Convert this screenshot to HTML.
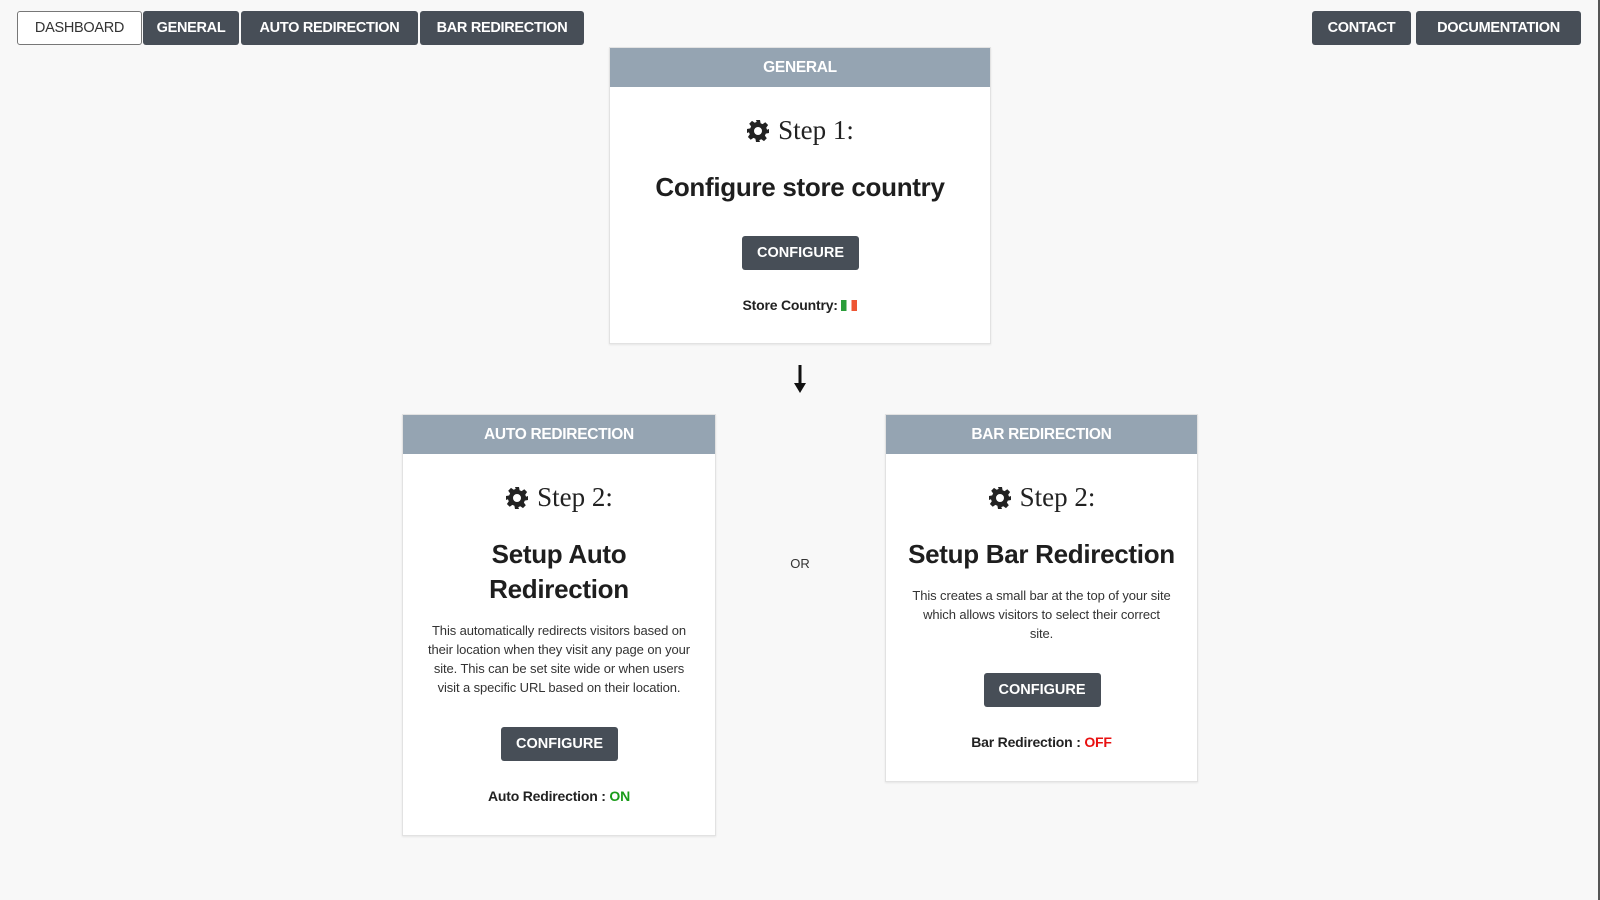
<!DOCTYPE html>
<html><head><style>
*{box-sizing:border-box;margin:0;padding:0}
body{width:1600px;height:900px;background:#f8f8f8;font-family:"Liberation Sans",sans-serif;position:relative;overflow:hidden;color:#222}
.nb{position:absolute;top:11px;height:34px;background:#474e57;color:#fff;border-radius:3px;font-size:14.5px;font-weight:bold;display:flex;align-items:center;justify-content:center;letter-spacing:-0.3px}
.nb.w{background:#fff;color:#333;border:1px solid #777;font-weight:normal}
.card{position:absolute;background:#fff;border:1px solid #e2e2e2;box-shadow:0 1px 2px rgba(0,0,0,.08);text-align:center}
.hd{height:39px;background:#95a4b2;color:#fff;font-weight:bold;font-size:15.5px;line-height:39px;letter-spacing:-0.3px}
.ab{position:absolute;left:0;right:0;text-align:center}
.step{font-family:"Liberation Serif",serif;font-size:27px;color:#222;display:flex;align-items:center;justify-content:center;gap:8px}
.h{font-size:26px;font-weight:bold;line-height:35px;color:#1e1e1e;letter-spacing:-0.3px}
.p{font-size:13px;line-height:19px;color:#333;letter-spacing:-0.1px;white-space:nowrap}
.btn{position:absolute;height:34px;width:117px;background:#474e57;color:#fff;border-radius:3px;font-weight:bold;font-size:14.5px;line-height:34px;left:50%;margin-left:-58px}
.st{font-size:14px;font-weight:bold;color:#222;letter-spacing:-0.2px}
</style></head><body>
<div class="nb w" style="left:17px;width:125px">DASHBOARD</div>
<div class="nb" style="left:143px;width:96px">GENERAL</div>
<div class="nb" style="left:241px;width:177px">AUTO REDIRECTION</div>
<div class="nb" style="left:420px;width:164px">BAR REDIRECTION</div>
<div class="nb" style="left:1312px;width:99px">CONTACT</div>
<div class="nb" style="left:1416px;width:165px">DOCUMENTATION</div>
<div style="position:absolute;right:0;top:0;width:2px;height:900px;background:#555"></div>

<svg width="0" height="0" style="position:absolute"><defs><symbol id="g" viewBox="0 0 24 24"><path fill="#222" d="M10 1h4l.6 3.2 2 .9 2.7-1.9 2.8 2.8-1.9 2.7.9 2L23 10v4l-3.2.6-.9 2 1.9 2.7-2.8 2.8-2.7-1.9-2 .9L14 23h-4l-.6-3.2-2-.9-2.7 1.9-2.8-2.8 1.9-2.7-.9-2L1 14v-4l3.2-.6.9-2-1.9-2.7 2.8-2.8 2.7 1.9 2-.9zM12 8a4 4 0 100 8 4 4 0 000-8z"/></symbol></defs></svg>

<div class="card" style="left:609px;top:47px;width:382px;height:297px">
<div class="hd">GENERAL</div>
<div class="ab step" style="top:67px"><svg width="24" height="24"><use href="#g"/></svg>Step 1:</div>
<div class="ab h" style="top:122px">Configure store country</div>
<div class="btn" style="top:188px">CONFIGURE</div>
<div class="ab st" style="top:249px">Store Country: <span style="display:inline-block;width:16px;height:11px;vertical-align:-1px;background:linear-gradient(90deg,#2a9d3a 33%,#fff 33% 66%,#e53 66%)"></span></div>
</div>

<svg style="position:absolute;left:790px;top:364px" width="20" height="30" viewBox="0 0 20 30"><path d="M10 1V26" stroke="#111" stroke-width="3"/><path d="M4 19L10 29L16 19Z" fill="#111"/></svg>

<div class="card" style="left:402px;top:414px;width:314px;height:422px">
<div class="hd">AUTO REDIRECTION</div>
<div class="ab step" style="top:67px"><svg width="24" height="24"><use href="#g"/></svg>Step 2:</div>
<div class="ab h" style="top:122px">Setup Auto<br>Redirection</div>
<div class="ab p" style="top:206px">This automatically redirects visitors based on<br>their location when they visit any page on your<br>site. This can be set site wide or when users<br>visit a specific URL based on their location.</div>
<div class="btn" style="top:312px">CONFIGURE</div>
<div class="ab st" style="top:373px">Auto Redirection : <span style="color:#1a9c1a">ON</span></div>
</div>

<div style="position:absolute;left:780px;top:556px;width:40px;text-align:center;font-size:13px;color:#333">OR</div>

<div class="card" style="left:885px;top:414px;width:313px;height:368px">
<div class="hd">BAR REDIRECTION</div>
<div class="ab step" style="top:67px"><svg width="24" height="24"><use href="#g"/></svg>Step 2:</div>
<div class="ab h" style="top:122px">Setup Bar Redirection</div>
<div class="ab p" style="top:171px">This creates a small bar at the top of your site<br>which allows visitors to select their correct<br>site.</div>
<div class="btn" style="top:258px">CONFIGURE</div>
<div class="ab st" style="top:319px">Bar Redirection : <span style="color:#e81010">OFF</span></div>
</div>
</body></html>
